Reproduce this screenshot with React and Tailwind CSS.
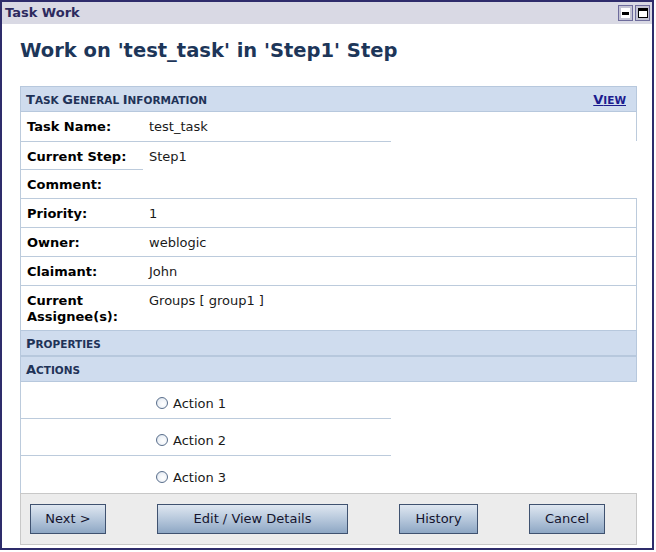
const font = { fontFamily: '"DejaVu Sans", Verdana, sans-serif' };

// hand-made small caps: first letter of each word bigger
const Caps = ({ text, big = 'text-[13px]', small = 'text-[10.5px]' }) => (
  <span className="uppercase">
    {text.split(' ').map((w, i) => (
      <span key={i}>
        {i > 0 && <span className={small}> </span>}
        <span className={big}>{w[0]}</span>
        <span className={small}>{w.slice(1)}</span>
      </span>
    ))}
  </span>
);

const Band = ({ children, right }) => (
  <div className="flex h-[26px] items-center justify-between border border-[#b7c8dd] bg-[#cfdcee] pl-[5px] pr-[10px] font-bold text-[#1f3358]">
    <Caps text={children} />
    {right}
  </div>
);

const Row = ({ label, value, h = 'h-[29px]' }) => (
  <div className={`flex ${h} border-t border-[#bccbdc]`}>
    <div className="w-[122px] pl-[6px] pt-[7px] text-[13px] font-bold leading-[16px] text-black">{label}</div>
    <div className="pl-[6px] pt-[7px] text-[13px] leading-[16px] text-[#1a1a1a]">{value}</div>
  </div>
);

const Radio = () => (
  <span className="inline-block h-[12px] w-[12px] rounded-full border border-[#5a6f8c] bg-[radial-gradient(circle_at_60%_60%,#ffffff_0%,#eef2f7_55%,#c7d2e0_100%)]" />
);

const Btn = ({ children, w }) => (
  <button className={`${w} h-[30px] border border-[#3f5270] bg-[linear-gradient(180deg,#dfe7f1_0%,#b7c8dc_50%,#8ea7c4_100%)] text-[13px] text-[#14142e]`}>
    {children}
  </button>
);

export default function App() {
  return (
    <div style={font} className="h-[552px] w-[656px] bg-white">
      <div className="flex h-[550px] w-[654px] flex-col border-2 border-[#2e2c6b]">
        <div className="flex h-[22px] items-center justify-between bg-[#d9d9e4] pl-[3px] pr-[2px]">
          <span className="text-[13px] font-bold text-[#2d2a5e]">Task Work</span>
          <div className="flex gap-[2px]">
            <span className="flex h-[16px] w-[15px] items-center justify-center border border-[#6e6c9c] bg-[#c4c4d4]">
              <span className="flex h-[10px] w-[9px] items-center justify-center bg-white">
                <span className="h-[3px] w-[7px] bg-black" />
              </span>
            </span>
            <span className="flex h-[16px] w-[15px] items-center justify-center border border-[#6e6c9c] bg-[#c4c4d4]">
              <span className="h-[10px] w-[10px] border border-t-[3px] border-black bg-white" />
            </span>
          </div>
        </div>

        <div className="pl-[18px] pr-[15px]">
          <h1 className="mb-[23px] mt-[15px] text-[19.5px] font-bold leading-[24px] text-[#1d3659]">
            Work on 'test_task' in 'Step1' Step
          </h1>

          <div className="w-[617px]">
            <Band right={<a className="text-[#1c1c8e] underline"><Caps text="View" /></a>}>Task General Information</Band>

            <div className="flex h-[29px] border-x border-[#bccbdc]">
              <div className="w-[122px] pl-[6px] pt-[7px] text-[13px] font-bold leading-[16px] text-black">Task Name:</div>
              <div className="pl-[6px] pt-[7px] text-[13px] leading-[16px] text-[#1a1a1a]">test_task</div>
            </div>
            <div className="h-px w-[371px] bg-[#bccbdc]" />
            <div className="flex h-[28px] border-l border-[#bccbdc]">
              <div className="w-[122px] border-b border-[#bccbdc] pl-[6px] pt-[7px] text-[13px] font-bold leading-[16px] text-black">Current Step:</div>
              <div className="pl-[6px] pt-[7px] text-[13px] leading-[16px] text-[#1a1a1a]">Step1</div>
            </div>
            <div className="flex h-[28px] border-l border-[#bccbdc]">
              <div className="w-[122px] pl-[6px] pt-[7px] text-[13px] font-bold leading-[16px] text-black">Comment:</div>
            </div>

            <div className="border-x border-[#bccbdc]">
              <Row label="Priority:" value="1" />
              <Row label="Owner:" value="weblogic" />
              <Row label="Claimant:" value="John" />
              <Row label={<>Current<br />Assignee(s):</>} value="Groups [ group1 ]" h="h-[45px]" />
            </div>

            <Band>Properties</Band>
            <Band>Actions</Band>

            {['Action 1', 'Action 2', 'Action 3'].map((a, i) => (
              <div key={a} className={`h-[37px] w-[371px] border-l border-[#bccbdc] ${i < 2 ? 'border-b' : ''}`}>
                <div className="flex items-center pl-[135px] pt-[11px] text-[13px] leading-[16px] text-[#1a1a1a]">
                  <Radio />
                  <span className="ml-[5px] mt-[3px]">{a}</span>
                </div>
              </div>
            ))}

            <div className="flex h-[52px] items-center gap-[51px] border border-[#c8c8c8] bg-[#ececec] pl-[9px]">
              <Btn w="w-[76px]">Next &gt;</Btn>
              <Btn w="w-[191px]">Edit / View Details</Btn>
              <Btn w="w-[79px]">History</Btn>
              <Btn w="w-[76px]">Cancel</Btn>
            </div>
          </div>
        </div>
      </div>
    </div>
  );
}
